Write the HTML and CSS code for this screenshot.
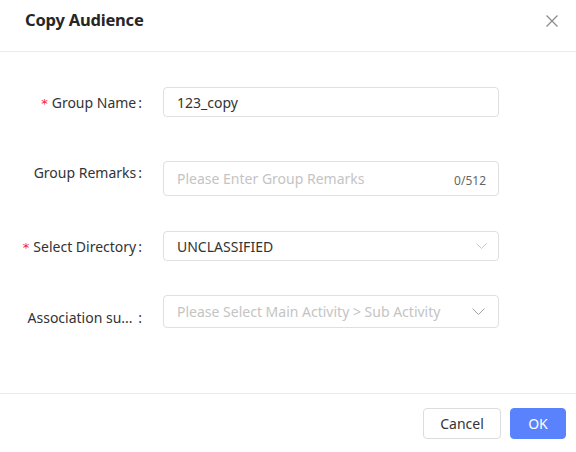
FILE: index.html
```html
<!DOCTYPE html>
<html>
<head>
<meta charset="utf-8">
<link rel="stylesheet" href="styles.css">
</head>
<body>
<div class="dialog">
  <div class="header">
    <div class="title">Copy Audience</div>
    <div class="close">
      <svg width="14" height="14" viewBox="0 0 14 14"><path d="M1.5 1.5 L12.5 12.5 M12.5 1.5 L1.5 12.5" stroke="#8c8c8c" stroke-width="1.3" fill="none"/></svg>
    </div>
  </div>
  <div class="body">
    <div class="row r1">
      <div class="label"><span class="req">*</span>Group Name<span class="colon">:</span></div>
      <div class="control input"><span class="value">123_copy</span></div>
    </div>
    <div class="row r2">
      <div class="label">Group Remarks<span class="colon">:</span></div>
      <div class="control input tall"><span class="ph">Please Enter Group Remarks</span><span class="count">0/512</span></div>
    </div>
    <div class="row r3">
      <div class="label"><span class="req">*</span>Select Directory<span class="colon">:</span></div>
      <div class="control input"><span class="value">UNCLASSIFIED</span>
        <svg class="chev light" width="11" height="6" viewBox="0 0 11 6"><path d="M0.5 0.5 L5.5 5.5 L10.5 0.5" stroke="#c8c8c8" stroke-width="1" fill="none"/></svg>
      </div>
    </div>
    <div class="row r4">
      <div class="label low">Association su... <span class="colon">:</span></div>
      <div class="control input t4"><span class="ph">Please Select Main Activity &gt; Sub Activity</span>
        <svg class="chev dark" width="13" height="7" viewBox="0 0 13 7"><path d="M0.5 0.5 L6.5 6.5 L12.5 0.5" stroke="#a0a0a0" stroke-width="1" fill="none"/></svg>
      </div>
    </div>
  </div>
  <div class="footer">
    <button class="btn cancel">Cancel</button>
    <button class="btn ok">OK</button>
  </div>
</div>
</body>
</html>
```
FILE: styles.css
```css
* { box-sizing: border-box; }
html, body { margin: 0; padding: 0; background: #fff; }
body { font-family: "Noto Sans", "Open Sans", sans-serif; color: #333; }
.dialog { width: 576px; height: 452px; display: flex; flex-direction: column; }
.header { height: 52px; border-bottom: 1px solid #ebebeb; display: flex; align-items: flex-start; justify-content: space-between; padding: 9px 17px 0 25px; }
.title { font-size: 16.5px; line-height: 22px; font-weight: 700; color: #262626; letter-spacing: -0.2px; }
.close { width: 14px; height: 14px; display: flex; margin-top: 5px; }
.body { flex: 1; padding-top: 35px; }
.row { display: flex; align-items: center; }
.r2 { margin-top: 44px; align-items: flex-start; }
.r3 { margin-top: 35px; }
.r4 { margin-top: 34px; }
.label { width: 163px; padding-right: 21px; text-align: right; font-size: 14px; color: #333; white-space: nowrap; }
.r2 .label { line-height: 24px; }
.label.low { position: relative; top: 6px; }
.req { color: #f5222d; margin-right: 4px; font-family: "DejaVu Sans", sans-serif; font-size: 13px; }
.colon { margin-left: 2px; }
.control { width: 336px; height: 30px; border: 1px solid #e0e0e0; border-radius: 4px; display: flex; align-items: center; padding: 0 13px; font-size: 14px; }
.control.tall { height: 35px; }
.control.t4 { height: 33px; }
.value { color: #333; flex: 1; }
.ph { color: #c4c4c4; flex: 1; white-space: nowrap; }
.count { font-size: 12px; color: #666; margin-top: 3px; margin-right: -1px; }
.chev.light { margin-right: -2px; }
.chev.dark { margin-right: 0px; }
.footer { height: 59px; border-top: 1px solid #ebebeb; display: flex; justify-content: flex-end; align-items: flex-start; padding: 14px 10px 0 0; gap: 9px; }
.btn { height: 31px; border-radius: 4px; font-family: "Noto Sans", sans-serif; font-size: 14px; padding: 0; cursor: pointer; }
.cancel { width: 78px; background: #fff; border: 1px solid #dcdcdc; color: #333; }
.ok { width: 56px; background: #5b82fd; border: 1px solid #5b82fd; color: #fff; }
```
